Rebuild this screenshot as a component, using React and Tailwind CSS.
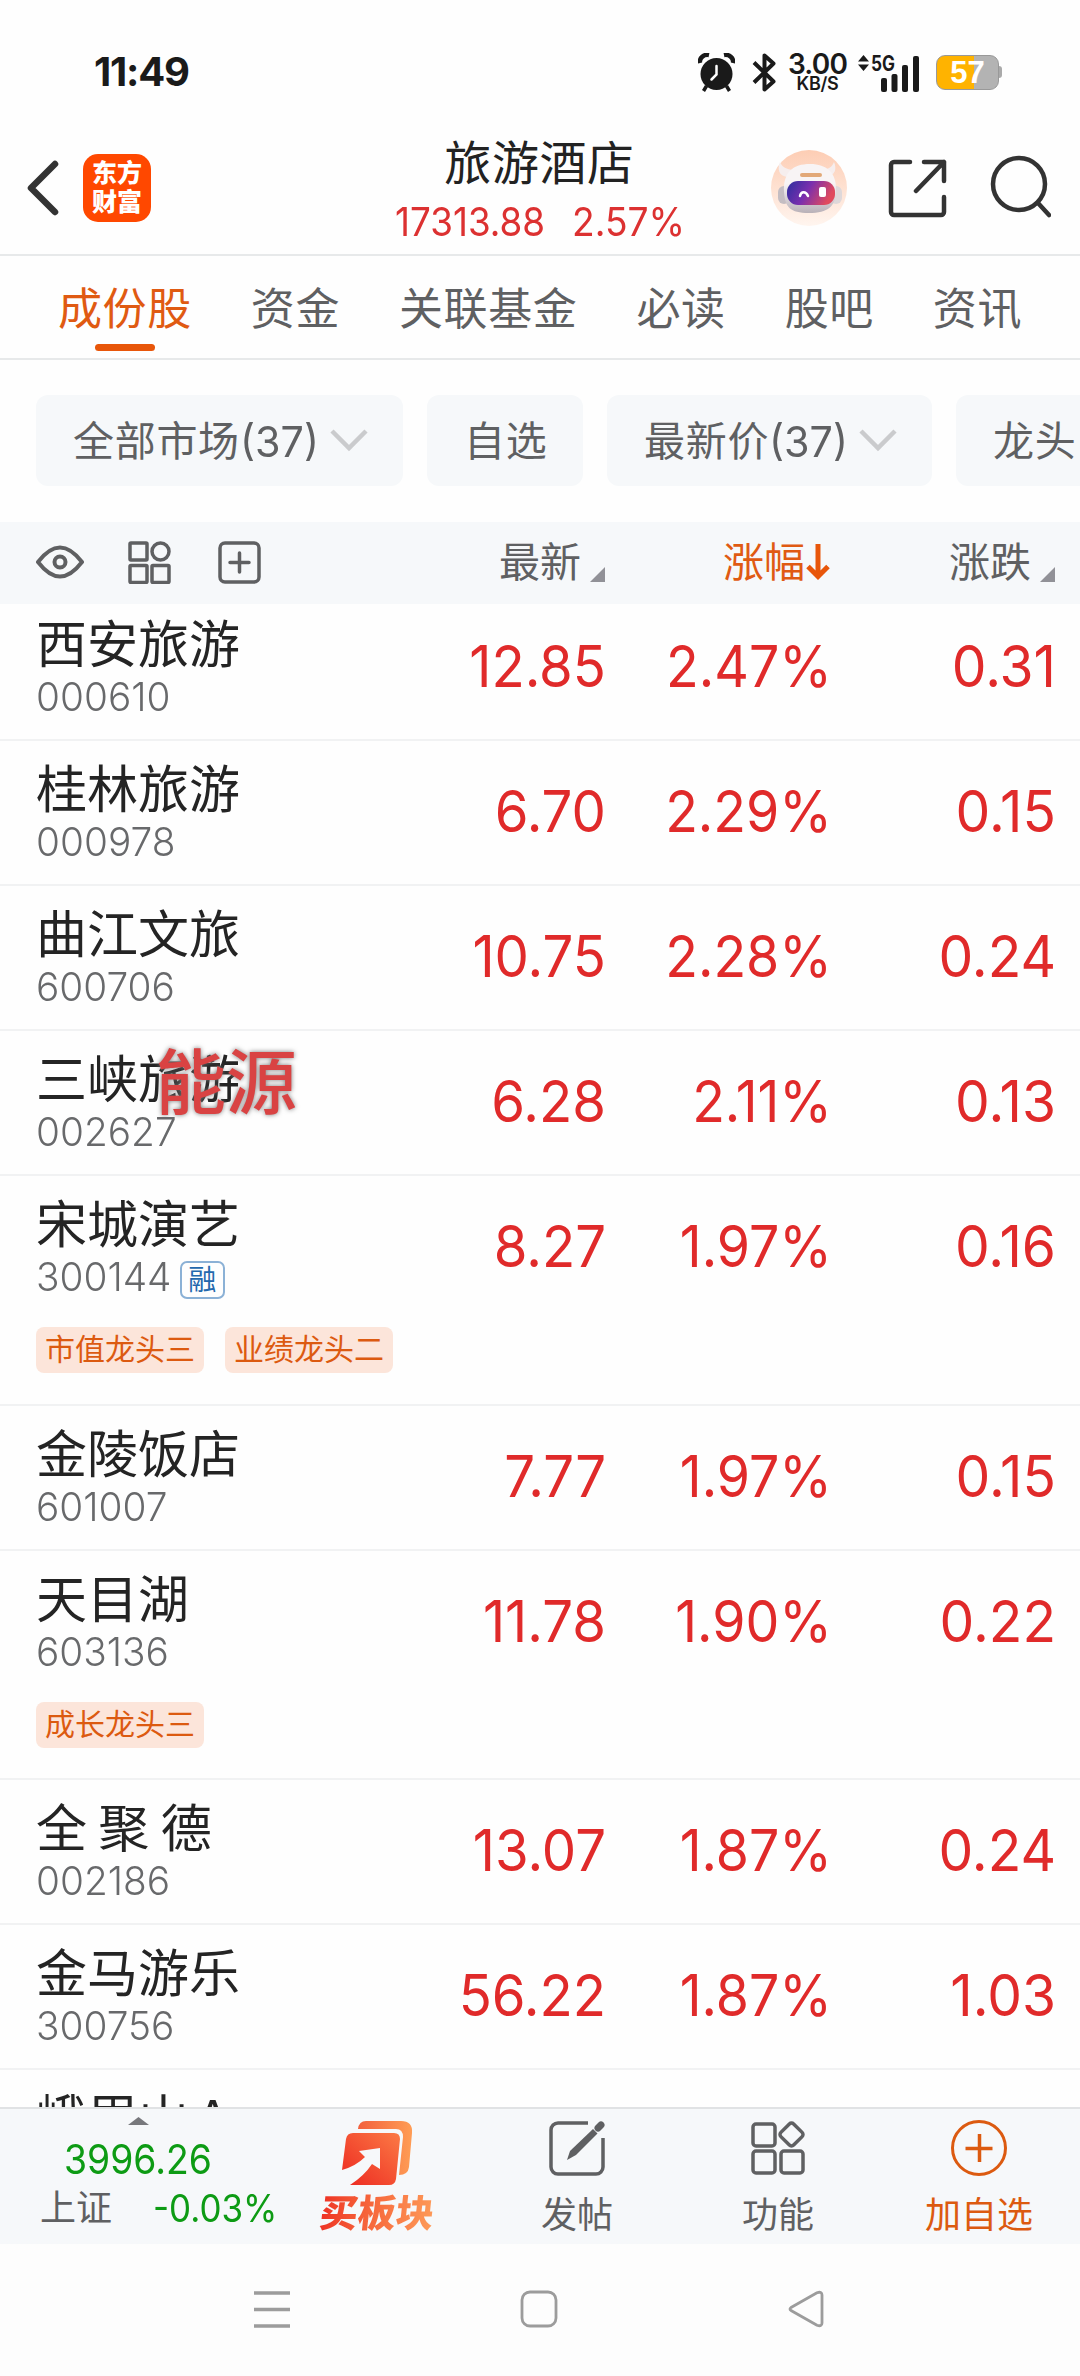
import React, { useState } from 'react';

const tabs = ['成份股', '资金', '关联基金', '必读', '股吧', '资讯'];

const filters = [
  { label: '全部市场', count: 37, width: 'w-[367px]' },
  { label: '自选', width: 'w-[156px]' },
  { label: '最新价', count: 37, width: 'w-[325px]' },
  { label: '龙头', width: 'w-[200px]' },
];

const stocks = [
  { name: '西安旅游', code: '000610', price: '12.85', pct: '2.47%', change: '0.31' },
  { name: '桂林旅游', code: '000978', price: '6.70', pct: '2.29%', change: '0.15' },
  { name: '曲江文旅', code: '600706', price: '10.75', pct: '2.28%', change: '0.24' },
  { name: '三峡旅游', code: '002627', price: '6.28', pct: '2.11%', change: '0.13', stamp: '能源' },
  { name: '宋城演艺', code: '300144', price: '8.27', pct: '1.97%', change: '0.16', margin: true, tags: ['市值龙头三', '业绩龙头二'] },
  { name: '金陵饭店', code: '601007', price: '7.77', pct: '1.97%', change: '0.15' },
  { name: '天目湖', code: '603136', price: '11.78', pct: '1.90%', change: '0.22', tags: ['成长龙头三'] },
  { name: '全 聚 德', code: '002186', price: '13.07', pct: '1.87%', change: '0.24' },
  { name: '金马游乐', code: '300756', price: '56.22', pct: '1.87%', change: '1.03' },
];

const StatusBar = () => (
  <div className="flex h-[112px] items-start justify-between pl-[94px] pr-[78px] pt-[52px] text-[#1a1a1a]">
    <span className="text-[40px] font-bold leading-[40px] tracking-[-1.2px]">11:49</span>
    <div className="flex h-10 items-center">
      <svg className="h-[39px] w-[37px]" viewBox="0 0 37 39">
        <circle cx="18.5" cy="21" r="16" fill="currentColor" />
        <path d="M2 10C1 5 6 1 11 2M35 10C36 5 31 1 26 2" fill="none" stroke="currentColor" strokeWidth="4.5" />
        <path d="M8.500 33l-3 5M28.500 33l3 5" stroke="currentColor" strokeWidth="3.500" />
        <path d="M18.500 13v8.500l-5 5" fill="none" stroke="#fff" strokeWidth="2.500" strokeLinecap="round" />
      </svg>
      <svg className="ml-[17px] h-[39px] w-[24px]" viewBox="0 0 24 39" fill="none" stroke="currentColor" strokeWidth="4" strokeLinejoin="round">
        <path d="M2 9.500L21.500 28.500 12.500 36.500V2.500L21.500 10.500 2 29.500" />
      </svg>
      <div className="ml-[12px] flex w-[59px] flex-col items-center font-semibold">
        <span className="text-[28px] leading-[22px] tracking-[-0.8px]">3.00</span>
        <span className="text-[18px] leading-[17px] tracking-[-0.3px]">KB/S</span>
      </div>
      <svg className="ml-[10px] h-[39px] w-[64px]" viewBox="0 0 64 39" fill="currentColor">
        <path d="M1 8.500L6.500 2l5.500 6.500zM1 11.500L6.500 18l5.500-6.500z" />
        <text x="14" y="17.500" fontSize="21" fontWeight="700" textLength="24" lengthAdjust="spacingAndGlyphs">5G</text>
        <rect x="24" y="25" width="6" height="14" rx="2" />
        <rect x="34.500" y="21" width="6" height="18" rx="2" />
        <rect x="45" y="12" width="6" height="27" rx="2" />
        <rect x="56" y="3" width="6" height="36" rx="2" />
      </svg>
      <div className="ml-[15px] flex items-center">
        <div className="flex h-[35px] w-[63px] items-center justify-center rounded-[9px] border border-[#999] bg-[linear-gradient(90deg,#ffb300_0_60%,#b3b3b3_60%)]">
          <span className="font-['Liberation_Sans'] text-[31px] font-bold leading-[35px] text-white">57</span>
        </div>
        <div className="h-3 w-[3px] rounded-r-[3px] bg-[#aaa]" />
      </div>
    </div>
  </div>
);

const RobotAvatar = () => (
  <svg className="size-[76px]" viewBox="0 0 76 76">
    <defs>
      <linearGradient id="avatarBg" x1="0" y1="0" x2="0" y2="1">
        <stop offset="0" stopColor="#fdcdb4" />
        <stop offset="1" stopColor="#fff5ef" />
      </linearGradient>
      <linearGradient id="visor" x1="0" y1="0" x2="1" y2="0.3">
        <stop offset="0" stopColor="#2b2e9e" />
        <stop offset="0.5" stopColor="#7a2fae" />
        <stop offset="1" stopColor="#e04a5e" />
      </linearGradient>
      <linearGradient id="helmet" x1="0" y1="0" x2="0" y2="1">
        <stop offset="0.4" stopColor="#f8f4f5" />
        <stop offset="1" stopColor="#b9b1b8" />
      </linearGradient>
    </defs>
    <circle cx="38" cy="38" r="38" fill="url(#avatarBg)" />
    <path d="M16 27C8 26 6 19 9 12c2 5 6 7 12 8zM57 26c7-1 9-7 6-14-2 5-5 7-11 8z" fill="#f6eeee" />
    <rect x="7" y="36" width="12" height="18" rx="6" fill="#c4bdc2" />
    <rect x="59" y="36" width="12" height="18" rx="6" fill="#ded8da" />
    <path d="M13 42C12 22 22 14 39 14s27 9 26 27c0 15-8 22-27 22S14 57 13 42z" fill="url(#helmet)" />
    <rect x="29" y="23" width="22" height="4" rx="2" fill="#e2a878" />
    <rect x="16" y="31" width="48" height="24" rx="11" fill="url(#visor)" />
    <path d="M29 46c1-5 6-5 8 0" fill="none" stroke="#fff" strokeWidth="2.500" strokeLinecap="round" />
    <rect x="48" y="37" width="7" height="10" rx="2" fill="#fff" />
  </svg>
);

const Header = () => (
  <div className="grid h-[144px] grid-cols-[1fr_auto_1fr] border-b-2 border-[#e7e9ea] pl-[26px] pr-[29px]">
    <div className="flex items-start pt-[42px]">
      <svg className="mt-[6px] h-[56px] w-[34px]" viewBox="0 0 34 56" fill="none" stroke="#333" strokeWidth="6.500" strokeLinecap="round" strokeLinejoin="round">
        <path d="M29 4L5 28l24 24" />
      </svg>
      <div className="ml-[23px] flex h-[68px] w-[68px] flex-col items-center justify-center rounded-[15px] bg-[#ff4800] text-[25px] font-black leading-[29px] text-white">
        <span>东方</span>
        <span>财富</span>
      </div>
    </div>
    <div className="flex w-[288px] flex-col items-center">
      <h1 className="mt-[26px] pl-[2px] text-[47px] leading-[50px] tracking-[0.6px] text-[#222]">旅游酒店</h1>
      <div className="mt-[12px] flex w-full justify-between text-[40px] leading-[44px] text-[#dc3131]">
        <span className="w-[150px] origin-left scale-x-[0.92]">17313.88</span>
        <span className="w-[111px] origin-left scale-x-[0.93]">2.57%</span>
      </div>
    </div>
    <div className="flex items-start justify-end pt-[38px] text-[#333]">
      <RobotAvatar />
      <svg className="ml-[40px] mt-[8px] size-[60px]" viewBox="0 0 60 60" fill="none" stroke="currentColor" strokeWidth="4.500" strokeLinecap="round" strokeLinejoin="round">
        <path d="M23 4H7a3 3 0 00-3 3v47a3 3 0 003 3h47a3 3 0 003-3V39M37 4H57V23M57 4L29 33" />
      </svg>
      <svg className="ml-[43px] mt-[5px] h-[64px] w-[61px]" viewBox="0 0 61 64" fill="none" stroke="currentColor" strokeWidth="4.500" strokeLinecap="round">
        <circle cx="29" cy="29" r="26" />
        <path d="M48 48l11 12" />
      </svg>
    </div>
  </div>
);

const Chevron = () => (
  <svg className="h-[24px] w-[38px]" viewBox="0 0 38 24" fill="none" stroke="#cacbcd" strokeWidth="4.500">
    <path d="M2 2l17 17L36 2" />
  </svg>
);

const SortCorner = () => (
  <svg className="ml-[9px] mt-[25px] size-[15px]" viewBox="0 0 15 15">
    <path d="M15 0v15H0z" fill="#919197" />
  </svg>
);

const TableHead = () => (
  <div className="flex h-[82px] items-center bg-[#f6f8fa] pb-[2px] text-[41px] leading-[48px] text-[#5f6062]">
    <div className="flex w-[261px] items-center pl-[36px]">
      <svg className="h-[34px] w-[48px]" viewBox="0 0 48 34" fill="none" stroke="currentColor" strokeWidth="4">
        <path d="M2 17C12 4 19 2.500 24 2.500S36 4 46 17C36 30 29 31.500 24 31.500S12 30 2 17z" strokeLinejoin="round" />
        <circle cx="24" cy="17" r="5.500" />
      </svg>
      <svg className="ml-[44px] size-[43px]" viewBox="0 0 43 43" fill="none" stroke="currentColor" strokeWidth="3.500">
        <rect x="2" y="2" width="17" height="17" rx="1" />
        <circle cx="32.500" cy="10.500" r="8.500" />
        <rect x="2" y="24.500" width="17" height="17" rx="1" />
        <rect x="24" y="24.500" width="17" height="17" rx="1" />
      </svg>
      <svg className="ml-[47px] size-[43px]" viewBox="0 0 43 43" fill="none" stroke="currentColor" strokeWidth="3.500" strokeLinecap="round">
        <rect x="2" y="2" width="39" height="39" rx="5" />
        <path d="M21.500 12v19M12 21.500h19" />
      </svg>
    </div>
    <div className="flex w-[344px] items-center justify-end"><span>最新</span><SortCorner /></div>
    <div className="flex w-[225px] items-center justify-end text-[#e05a12]">
      <span>涨幅</span>
      <svg className="ml-[1px] h-[38px] w-[24px]" viewBox="0 0 24 38" fill="none" stroke="#e8560a" strokeWidth="5">
        <path d="M12 1v32M2 23.500l10 10 10-10" />
      </svg>
    </div>
    <div className="flex w-[225px] items-center justify-end"><span>涨跌</span><SortCorner /></div>
  </div>
);

const StockRow = ({ stock }) => (
  <div className={`flex shrink-0 items-start border-b-2 border-[#f1f2f3] ${stock.tags ? 'h-[229.5px]' : 'h-[145px]'}`}>
    <div className="w-[396px] pl-[36px] pt-[23px]">
      <div className="relative text-[51px] leading-[52px] text-[#242424] [word-spacing:-3px]">
        {stock.name}
        {stock.stamp && (
          <span className="absolute left-[119px] top-[-8px] text-[71px] font-medium leading-[72px] text-[#d94343] [text-shadow:0_0_5px_#777]">
            {stock.stamp}
          </span>
        )}
      </div>
      <div className="mt-[6px] flex h-10 items-center text-[#68696b]">
        <span className="origin-left scale-x-[0.97] text-[40px] font-light leading-[40px]">{stock.code}</span>
        {stock.margin && (
          <span className="ml-[4px] mt-[6px] flex h-[38px] w-[45px] items-center justify-center rounded-[7px] border-2 border-[#8bb1d6] text-[28px] leading-[34px] text-[#2468ad]">
            融
          </span>
        )}
      </div>
      {stock.tags && (
        <div className="mt-[30px] flex gap-[21px]">
          {stock.tags.map((tag) => (
            <span key={tag} className="flex h-[46px] w-[168px] shrink-0 items-center justify-center rounded-lg bg-[#fce5da] pb-[2px] text-[30px] leading-[42px] text-[#dc5a10]">
              {tag}
            </span>
          ))}
        </div>
      )}
    </div>
    <div className="flex pt-[41px] text-right text-[58px] leading-[58px] text-[#e02a2a]">
      <span className="w-[210px] origin-right scale-x-[0.94]">{stock.price}</span>
      <span className="w-[226px] origin-right scale-x-[0.925]">{stock.pct}</span>
      <span className="w-[224px] origin-right scale-x-[0.95]">{stock.change}</span>
    </div>
  </div>
);

const BottomBar = () => (
  <div className="flex h-[137px] border-t-2 border-[#e0e2e4] bg-[#f6f8fa] text-[#5f6062]">
    <div className="flex w-[312px] shrink-0 flex-col">
      <svg className="ml-[128px] mt-[8px] h-[8px] w-[21px]" viewBox="0 0 21 8"><path d="M10.500 0L21 8H0z" fill="#77787c" /></svg>
      <span className="ml-[64px] mt-[9px] origin-left scale-x-[0.91] text-[41px] leading-[50px] text-[#0d9b14]">3996.26</span>
      <div className="ml-[40px] flex items-center text-[36px] leading-[48px]">
        <span>上证</span>
        <span className="ml-[41px] origin-left scale-x-[0.92] text-[38px] text-[#0d9b14]">-0.03%</span>
      </div>
    </div>
    <div className="flex w-[130px] shrink-0 flex-col items-center pt-[11px]">
      <svg className="h-[67px] w-[71px]" viewBox="0 0 71 67">
        <defs>
          <linearGradient id="front" x1="0" y1="1" x2="1" y2="0">
            <stop offset="0.1" stopColor="#ee3024" />
            <stop offset="1" stopColor="#fb7a45" />
          </linearGradient>
          <linearGradient id="back" x1="0" y1="0" x2="1" y2="0">
            <stop offset="0" stopColor="#f2603d" />
            <stop offset="1" stopColor="#ff9d55" />
          </linearGradient>
        </defs>
        <path d="M16 9q1-8 8-8h35q12 0 11 12l-3 34q-1 8-10 8l4-38q0-8-7-8z" fill="url(#back)" />
        <path d="M11 13h41q6 0 6 6l-4 40q-1 6-7 6H8q14-9 22-21l8 5V28l-21 3 6 6Q14 46 0 50l4-31q1-6 7-6z" fill="url(#front)" />
      </svg>
      <span className="mt-[4px] -skew-x-6 bg-linear-to-r from-[#ee3024] to-[#fd9a58] bg-clip-text text-[38px] font-black leading-[44px] text-transparent">买板块</span>
    </div>
    <div className="flex w-[270px] shrink-0 flex-col items-center pt-[11px] text-[36px]">
      <svg className="h-[56px] w-[56px]" viewBox="0 0 56 56" fill="none" stroke="currentColor" strokeWidth="3.500">
        <path d="M39 3H9a7 7 0 00-7 7v37a7 7 0 007 7h38a7 7 0 007-7V18" />
        <path d="M18 40l3-9L44 9l4.500 4.500L27 35z" fill="currentColor" stroke="none" />
        <path d="M49 8l3-3" strokeWidth="7" strokeLinecap="round" />
      </svg>
      <span className="mt-[17px] leading-[44px]">发帖</span>
    </div>
    <div className="flex w-[132px] shrink-0 flex-col items-center pt-[11px] text-[36px]">
      <svg className="h-[56px] w-[54px]" viewBox="0 0 54 56" fill="none" stroke="currentColor" strokeWidth="3.500">
        <rect x="2" y="4" width="22" height="22" rx="3" />
        <rect x="2" y="31" width="22" height="22" rx="3" />
        <rect x="30" y="31" width="22" height="22" rx="3" />
        <rect x="31.500" y="5.500" width="18" height="18" rx="3" transform="rotate(45 40.500 14.500)" />
      </svg>
      <span className="mt-[17px] leading-[44px]">功能</span>
    </div>
    <div className="flex flex-1 flex-col items-center pl-[34px] pt-[10px] text-[36px] text-[#dc5a10]">
      <svg className="size-[58px]" viewBox="0 0 58 58" fill="none" stroke="currentColor" strokeWidth="3">
        <circle cx="29" cy="29" r="26.500" />
        <path d="M29.500 15v28M15.500 29.500h27" strokeWidth="3.500" />
      </svg>
      <span className="mt-[16px] leading-[44px]">加自选</span>
    </div>
  </div>
);

const SystemNav = () => (
  <div className="flex h-[132px] items-start justify-between bg-[#fdfdfd] pl-[254px] pr-[256px] pt-[46px] text-[#9c9c9c]">
    <svg className="h-[39px] w-[36px]" viewBox="0 0 36 39" stroke="currentColor" strokeWidth="3.300">
      <path d="M0 3h36M0 19.500h36M0 36h36" />
    </svg>
    <svg className="size-[38px]" viewBox="0 0 38 38" fill="none" stroke="currentColor" strokeWidth="2.800">
      <rect x="2" y="2" width="34" height="34" rx="8" />
    </svg>
    <svg className="h-[38px] w-[36px]" viewBox="0 0 36 38" fill="none" stroke="currentColor" strokeWidth="2.800" strokeLinejoin="round">
      <path d="M3 17.500L29 2.800Q34 1 34 5v28q0 4-5 2.200L3 20.500q-2-1.500 0-3z" />
    </svg>
  </div>
);

const App = () => {
  const [activeTab, setActiveTab] = useState('成份股');

  return (
    <div className="flex h-[2376px] w-[1080px] flex-col overflow-hidden bg-[#fefefe] font-['Inter','Noto_Sans_CJK_SC',sans-serif]">
      <StatusBar />
      <Header />

      {/* Tabs */}
      <div className="flex h-[104px] gap-[59px] border-b-2 border-[#e7e9ea] pl-[58px] pt-[28px]">
        {tabs.map((tab) => (
          <button
            key={tab}
            onClick={() => setActiveTab(tab)}
            className={`flex shrink-0 flex-col items-center text-[44px] leading-[50px] tracking-[0.6px] ${tab === activeTab ? 'text-[#e05a12]' : 'text-[#5f6062]'}`}
          >
            {tab}
            {tab === activeTab && <span className="mt-[10px] h-[7px] w-[60px] rounded-full bg-[#e8560a]" />}
          </button>
        ))}
      </div>

      {/* Filters */}
      <div className="flex h-[162px] gap-6 overflow-hidden pl-[36px] pt-[35px]">
        {filters.map((f) => (
          <div key={f.label} className={`flex h-[91px] shrink-0 items-center rounded-xl bg-[#f6f8fa] pl-[37px] text-[41px] leading-[50px] text-[#5f6062] ${f.width}`}>
            <span className="tracking-[0.7px]">{f.label}</span>
            {f.count && (
              <>
                <span className="w-[90px] origin-left scale-x-[0.96] text-[43px]">({f.count})</span>
                <Chevron />
              </>
            )}
          </div>
        ))}
      </div>

      <TableHead />

      {/* Stock list, scrolled slightly under the column header */}
      <div className="min-h-0 flex-1 overflow-hidden">
        <div className="-mt-[8px] flex flex-col">
          {stocks.map((stock) => (
            <StockRow key={stock.code} stock={stock} />
          ))}
          <div className="h-[145px] pl-[36px] pt-[23px] text-[51px] leading-[52px] text-[#242424] [word-spacing:-8px]">峨眉山 A</div>
        </div>
      </div>

      <BottomBar />
      <SystemNav />
    </div>
  );
};

export default App;
